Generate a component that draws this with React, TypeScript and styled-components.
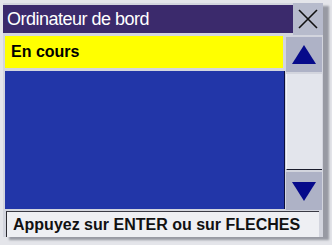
import React from 'react';
import styled, { createGlobalStyle } from 'styled-components';

const GlobalStyle = createGlobalStyle`
  html, body {
    margin: 0;
    padding: 0;
    background: #e4e5ea;
  }
  body {
    font-family: "Liberation Sans", Arial, sans-serif;
  }
`;

const Screen = styled.div`
  width: 332px;
  height: 245px;
  box-sizing: border-box;
  padding: 3px 0 0 3px;
  background: #e4e5ea;
  overflow: hidden;
`;

const Window = styled.div`
  width: 320px;
  display: flex;
  flex-direction: column;
  background: #d3d5de;
  box-shadow: 6px 3px 2px rgba(90, 92, 104, 0.55);
`;

const Header = styled.div`
  display: flex;
  align-items: flex-start;
  height: 32px;
`;

const Title = styled.div`
  flex: 1;
  height: 28px;
  margin-top: 2px;
  padding-left: 4px;
  display: flex;
  align-items: center;
  background: #3b2a6c;
  color: #ffffff;
  font-size: 18px;
  letter-spacing: -0.5px;
`;

const CloseButton = styled.div`
  width: 30px;
  height: 32px;
  display: flex;
  align-items: center;
  justify-content: center;
  background: #b7bbcc;
`;

const Body = styled.div`
  display: flex;
  padding-left: 2px;
  height: 175px;
`;

const ListColumn = styled.div`
  width: 280px;
  display: flex;
  flex-direction: column;
`;

const SelectedRow = styled.div`
  width: 278px;
  height: 32px;
  margin-top: 1px;
  padding-left: 6px;
  box-sizing: border-box;
  display: flex;
  align-items: center;
  background: #ffff00;
  color: #000000;
  font-size: 16px;
  font-weight: bold;
`;

const ListArea = styled.div`
  margin-top: 3px;
  height: 138px;
  box-sizing: border-box;
  background: #2236a8;
  border-right: 1px solid #0b0f3c;
`;

const ScrollColumn = styled.div`
  width: 36px;
  margin-left: 1px;
  padding-top: 2px;
  display: flex;
  flex-direction: column;
  gap: 2px;
`;

const ArrowButton = styled.div<{ $h: number }>`
  height: ${(p) => p.$h}px;
  display: flex;
  align-items: center;
  justify-content: center;
  background: #aeb2c6;
`;

const Track = styled.div`
  height: 95px;
  background: #e3e5ec;
  border-left: 1px solid #f4f5f8;
  border-bottom: 1px solid #1a1c2c;
`;

const StatusBar = styled.div`
  width: 313px;
  height: 26px;
  margin: 1px 0 0 3px;
  padding-left: 6px;
  box-sizing: border-box;
  display: flex;
  align-items: center;
  background: #eeeff3;
  border-left: 1px solid #2a2a30;
  border-top: 1px solid #3a3a44;
  color: #111111;
  font-size: 16px;
  font-weight: bold;
  white-space: nowrap;
`;

const Arrow: React.FC<{ up?: boolean }> = ({ up }) => (
  <svg width="24" height="19" viewBox="0 0 24 19">
    <polygon
      points={up ? '12,0 24,19 0,19' : '0,0 24,0 12,19'}
      fill="#060a8a"
    />
  </svg>
);

const App: React.FC = () => (
  <>
    <GlobalStyle />
    <Screen>
      <Window>
        <Header>
          <Title>Ordinateur de bord</Title>
          <CloseButton>
            <svg width="20" height="20" viewBox="0 0 20 20">
              <path d="M1 1 L19 19 M19 1 L1 19" stroke="#111" strokeWidth="1.6" />
            </svg>
          </CloseButton>
        </Header>
        <Body>
          <ListColumn>
            <SelectedRow>En cours</SelectedRow>
            <ListArea />
          </ListColumn>
          <ScrollColumn>
            <ArrowButton $h={35}>
              <Arrow up />
            </ArrowButton>
            <Track />
            <ArrowButton $h={38}>
              <Arrow />
            </ArrowButton>
          </ScrollColumn>
        </Body>
        <StatusBar>Appuyez sur ENTER ou sur FLECHES</StatusBar>
      </Window>
    </Screen>
  </>
);

export default App;
